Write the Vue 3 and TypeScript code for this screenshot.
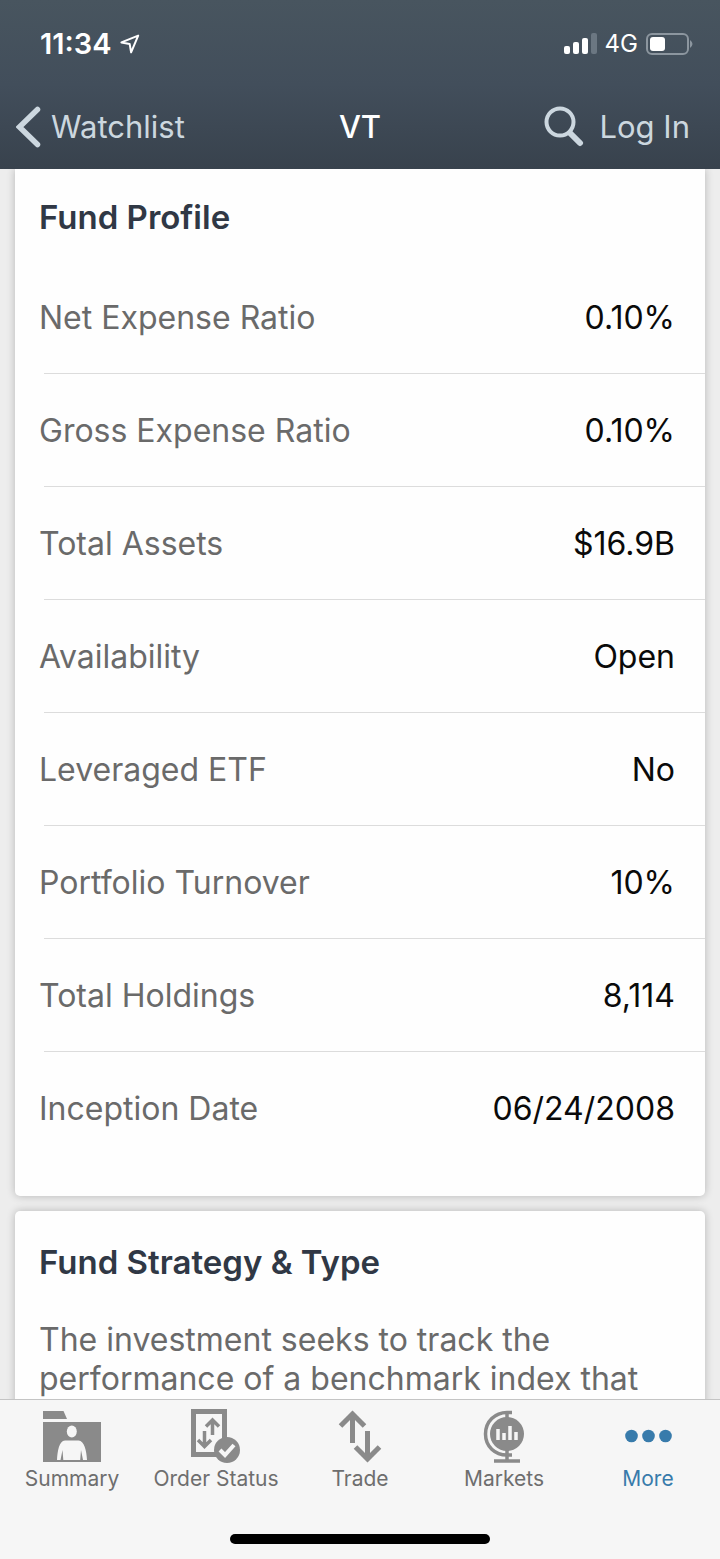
<script setup lang="ts">
interface ProfileRow {
  label: string
  value: string
}

interface Tab {
  id: string
  label: string
  active?: boolean
}

const profile: ProfileRow[] = [
  { label: 'Net Expense Ratio', value: '0.10%' },
  { label: 'Gross Expense Ratio', value: '0.10%' },
  { label: 'Total Assets', value: '$16.9B' },
  { label: 'Availability', value: 'Open' },
  { label: 'Leveraged ETF', value: 'No' },
  { label: 'Portfolio Turnover', value: '10%' },
  { label: 'Total Holdings', value: '8,114' },
  { label: 'Inception Date', value: '06/24/2008' },
]

const tabs: Tab[] = [
  { id: 'summary', label: 'Summary' },
  { id: 'orders', label: 'Order Status' },
  { id: 'trade', label: 'Trade' },
  { id: 'markets', label: 'Markets' },
  { id: 'more', label: 'More', active: true },
]
</script>

<template>
  <div class="app">
    <header class="top">
      <div class="status">
        <div class="clock">
          <span>11:34</span>
          <svg width="20" height="20" viewBox="0 0 20 20" aria-hidden="true">
            <path d="M18.2 1.6 1.4 8.4l8.3 1.7 1.4 8.2z" fill="none" stroke="#fff" stroke-width="2" stroke-linejoin="round" />
          </svg>
        </div>
        <div class="signal">
          <svg width="33" height="22" viewBox="0 0 33 22" aria-hidden="true">
            <rect x="0" y="13" width="6" height="8" rx="2" fill="#fff" />
            <rect x="9" y="9" width="6" height="12" rx="2" fill="#fff" />
            <rect x="18" y="5" width="6" height="16" rx="2" fill="#fff" />
            <rect x="27" y="0" width="6" height="21" rx="2" fill="#6b7782" />
          </svg>
          <span class="network">4G</span>
          <svg width="47" height="22" viewBox="0 0 47 22" aria-hidden="true">
            <rect x="1" y="1" width="41" height="20" rx="5" fill="none" stroke="#8c969f" stroke-width="2" />
            <rect x="4" y="4" width="15" height="14" rx="3" fill="#fff" />
            <path d="M44 7q5 4 0 8z" fill="#8c969f" />
          </svg>
        </div>
      </div>
      <nav class="nav">
        <button type="button" class="nav-button back">
          <svg width="25" height="42" viewBox="0 0 25 42" aria-hidden="true">
            <path d="M21.500 3.500 3.500 21l18 17.500" fill="none" stroke="currentColor" stroke-width="5.500" stroke-linecap="round" />
          </svg>
          <span>Watchlist</span>
        </button>
        <h1 class="symbol">VT</h1>
        <div class="actions">
          <button type="button" class="nav-button" aria-label="Search">
            <svg width="40" height="42" viewBox="0 0 40 42" aria-hidden="true">
              <circle cx="16" cy="16" r="13.500" fill="none" stroke="currentColor" stroke-width="4" />
              <path d="m26 27 10 10" fill="none" stroke="currentColor" stroke-width="6" stroke-linecap="round" />
            </svg>
          </button>
          <button type="button" class="nav-button">Log In</button>
        </div>
      </nav>
    </header>

    <main class="content">
      <section class="card profile">
        <h2 class="title">Fund Profile</h2>
        <dl class="rows">
          <div v-for="row in profile" :key="row.label" class="row">
            <dt>{{ row.label }}</dt>
            <dd>{{ row.value }}</dd>
          </div>
        </dl>
      </section>
      <section class="card strategy">
        <h2 class="title">Fund Strategy &amp; Type</h2>
        <p class="text">The investment seeks to track the performance of a benchmark index that</p>
      </section>
    </main>

    <footer class="bottom">
      <nav class="tabs">
        <button v-for="tab in tabs" :key="tab.id" type="button" class="tab" :class="{ active: tab.active }">
          <svg v-if="tab.id === 'summary'" width="60" height="56" viewBox="0 0 60 56" fill="#8a8a8a" aria-hidden="true">
            <path d="M1 3h20.500l3.500 8H1zM1 14h58v40H1z" />
            <ellipse cx="29.800" cy="23.500" rx="5" ry="6" fill="#f6f6f6" />
            <path d="M15 52c.5-9 2-19 8-19.500h13.500c6 .5 8 10.500 8.500 19.500h-4l-2-10-.8 10H21.300l-.8-10-2 10z" fill="#f6f6f6" />
          </svg>
          <svg v-else-if="tab.id === 'orders'" width="60" height="56" viewBox="0 0 60 56" fill="none" stroke="#8a8a8a" aria-hidden="true">
            <rect x="7.500" y="3.500" width="31" height="43" stroke-width="5" />
            <path d="M26.500 27V13M20 18.500l6.500-6.500 6.500 6.500M18.500 23v14M12 32l6.500 6.500L25 32" stroke-width="3.500" />
            <circle cx="41" cy="42" r="13" fill="#8a8a8a" stroke="none" />
            <path d="m34 42 5 5 9-10" stroke="#f6f6f6" stroke-width="4" />
          </svg>
          <svg v-else-if="tab.id === 'trade'" width="60" height="56" viewBox="0 0 60 56" fill="none" stroke="#8a8a8a" stroke-width="5" aria-hidden="true">
            <path d="M22.500 35V7M10.500 18l12-12 12 12M37.500 23v28M25.500 39l12 12 12-12" />
          </svg>
          <svg v-else-if="tab.id === 'markets'" width="60" height="56" viewBox="0 0 60 56" fill="none" stroke="#8a8a8a" aria-hidden="true">
            <circle cx="33" cy="26" r="17" fill="#8a8a8a" stroke="none" />
            <path d="M38 4.500h-5c-12 0-21.500 9-21.500 21.500S21 47 33 47h5" stroke-width="3.500" />
            <path d="M33 4v6M33 42v11M20 53h26" stroke-width="3.500" />
            <path d="M24 32V21M30 32v-7M36 32V18M42 32v-8" stroke="#f6f6f6" stroke-width="3.500" />
          </svg>
          <svg v-else width="60" height="56" viewBox="0 0 60 56" fill="currentColor" aria-hidden="true">
            <circle cx="13.500" cy="28" r="6.300" />
            <circle cx="30.500" cy="28" r="6.300" />
            <circle cx="47.500" cy="28" r="6.300" />
          </svg>
          <span>{{ tab.label }}</span>
        </button>
      </nav>
      <div class="home-indicator"></div>
    </footer>
  </div>
</template>

<style>
body {
  margin: 0;
}
</style>

<style scoped>
.app {
  display: flex;
  flex-direction: column;
  height: 100vh;
  background: #ededed;
  font-family: Inter, "Liberation Sans", sans-serif;
  font-size: 32px;
  line-height: 40px;
}

.top {
  flex: none;
  background: linear-gradient(#48555f, #424e5b 50%, #38424d);
  color: #fff;
}

.status {
  display: flex;
  align-items: center;
  justify-content: space-between;
  height: 88px;
  padding: 0 27px 0 40px;
}

.clock,
.signal {
  display: flex;
  align-items: center;
}

.clock {
  gap: 8px;
  font-size: 29px;
  font-weight: 600;
}

.signal {
  gap: 8px;
}

.network {
  font-size: 24px;
}

.nav {
  display: grid;
  grid-template-columns: 1fr auto 1fr;
  align-items: center;
  height: 77px;
  padding: 0 16px 4px;
}

.nav-button {
  display: flex;
  align-items: center;
  padding: 0;
  border: 0;
  background: none;
  color: #ccd7df;
  font: inherit;
  font-size: 31px;
}

.back {
  gap: 10px;
}

.symbol {
  margin: 0;
  font-size: 31px;
  font-weight: 500;
}

.actions {
  display: flex;
  align-items: center;
  justify-content: flex-end;
  gap: 16px;
  padding-right: 14px;
}

.content {
  flex: 1;
  min-height: 0;
  overflow-y: auto;
  scrollbar-width: none;
}

.card {
  margin: 0 15px;
  border-radius: 5px;
  background: #fefefe;
  box-shadow: 0 0 8px rgba(0, 0, 0, 0.24);
}

.profile {
  padding: 28px 0 31px;
  border-radius: 0 0 5px 5px;
}

.title {
  margin: 0;
  padding: 0 24px;
  color: #303845;
  font-size: 33px;
  font-weight: 600;
}

.rows {
  margin: 24px 0 0;
}

.row {
  display: flex;
  align-items: center;
  justify-content: space-between;
  height: 113px;
  padding: 0 30px 0 24px;
  background: linear-gradient(#dcdcdc, #dcdcdc) 29px 100% / 100% 1px no-repeat;
}

.row:last-child {
  background: none;
}

.row dt {
  color: #6a6a6a;
}

.row dd {
  margin: 0;
  color: #0a0a0a;
}

.strategy {
  margin-top: 15px;
  padding: 31px 0;
}

.text {
  margin: 38px 24px 0;
  color: #6a6a6a;
  line-height: 39px;
}

.bottom {
  flex: none;
  border-top: 1px solid #c4c4c4;
  background: #f6f6f6;
}

.tabs {
  display: grid;
  grid-template-columns: repeat(5, 1fr);
  padding-top: 8px;
}

.tab {
  display: flex;
  flex-direction: column;
  align-items: center;
  padding: 0;
  border: 0;
  background: none;
  color: #6e6e6e;
  font: inherit;
  font-size: 21px;
  line-height: 30px;
  white-space: nowrap;
}

.tab.active {
  color: #387bab;
}

.home-indicator {
  width: 36%;
  height: 10px;
  margin: 40px auto 15px;
  border-radius: 5px;
  background: #000;
}
</style>
